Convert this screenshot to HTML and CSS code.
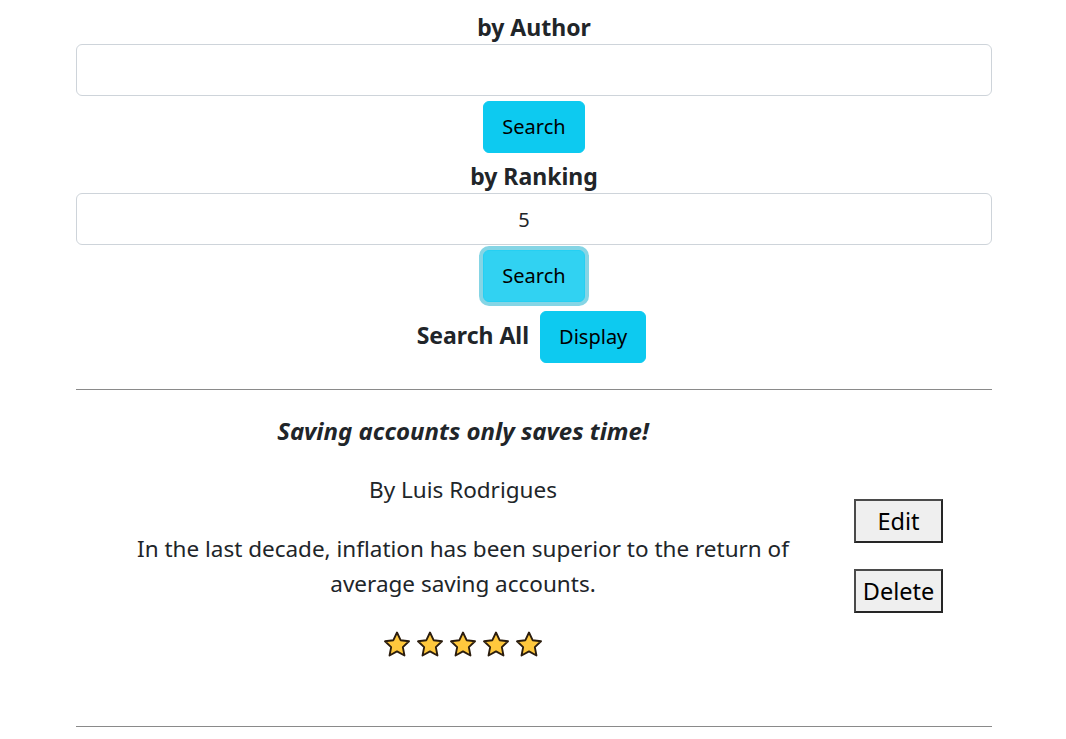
FILE: index.html
```html
<!DOCTYPE html>
<html lang="en">
<head>
<meta charset="utf-8">
<title>Articles</title>
<link rel="stylesheet" href="styles.css">
</head>
<body>
<main class="page">
  <section class="search">
    <h5 class="label label-first">by Author</h5>
    <input class="field" type="text" value="">
    <div class="btn-row"><button class="btn-info">Search</button></div>

    <h5 class="label label-second">by Ranking</h5>
    <input class="field field-number" type="text" value="5">
    <div class="btn-row"><button class="btn-info is-focused">Search</button></div>

    <div class="all-row"><span class="all-label">Search All</span><button class="btn-info">Display</button></div>
  </section>

  <hr class="rule rule-top">

  <article class="article">
    <div class="article-body">
      <h5 class="title">Saving accounts only saves time!</h5>
      <p class="byline">By Luis Rodrigues</p>
      <p class="text">In the last decade, inflation has been superior to the return of average saving accounts.</p>
      <div class="stars">
        <svg class="star" viewBox="0 0 24 24"><path d="M12 1.3l3.1 6.6 7.2.9-5.3 5 1.4 7.2L12 17.5l-6.4 3.5 1.4-7.2-5.3-5 7.2-.9z"/></svg>
        <svg class="star" viewBox="0 0 24 24"><path d="M12 1.3l3.1 6.6 7.2.9-5.3 5 1.4 7.2L12 17.5l-6.4 3.5 1.4-7.2-5.3-5 7.2-.9z"/></svg>
        <svg class="star" viewBox="0 0 24 24"><path d="M12 1.3l3.1 6.6 7.2.9-5.3 5 1.4 7.2L12 17.5l-6.4 3.5 1.4-7.2-5.3-5 7.2-.9z"/></svg>
        <svg class="star" viewBox="0 0 24 24"><path d="M12 1.3l3.1 6.6 7.2.9-5.3 5 1.4 7.2L12 17.5l-6.4 3.5 1.4-7.2-5.3-5 7.2-.9z"/></svg>
        <svg class="star" viewBox="0 0 24 24"><path d="M12 1.3l3.1 6.6 7.2.9-5.3 5 1.4 7.2L12 17.5l-6.4 3.5 1.4-7.2-5.3-5 7.2-.9z"/></svg>
      </div>
    </div>
    <div class="article-actions">
      <button class="btn-plain">Edit</button>
      <button class="btn-plain">Delete</button>
    </div>
  </article>

  <hr class="rule rule-bottom">
</main>
</body>
</html>
```

FILE: styles.css
```css
* { box-sizing: border-box; }

body {
  margin: 0;
  background: #fff;
  color: #212529;
  font-family: "Noto Sans", "Open Sans", sans-serif;
  font-size: 20px;
}

.page {
  width: 916px;
  margin-left: 76px;
}

.search {
  text-align: center;
}

.label {
  font-size: 23px;
  font-weight: 700;
  line-height: 30px;
  margin: 0 0 2px;
}

.label-first { margin-top: 12px; }
.label-second { margin-top: 8px; }

.field {
  display: block;
  width: 100%;
  height: 52px;
  border: 1px solid #ced4da;
  border-radius: 6px;
  padding: 0 12px;
  font: inherit;
  color: #212529;
  background: #fff;
  outline: none;
}

.field-number {
  text-align: center;
  padding: 0 32px 0 12px;
}

.btn-row {
  margin-top: 5px;
  height: 52px;
}

.btn-info {
  height: 52px;
  padding: 0 18px;
  border: 1px solid #0dcaf0;
  border-radius: 6px;
  background: #0dcaf0;
  color: #000;
  font: inherit;
  line-height: 30px;
  cursor: pointer;
}

.btn-info.is-focused {
  background: #31d2f2;
  border-color: #25cff2;
  box-shadow: 0 0 0 4px rgba(11, 172, 204, 0.5);
}

.all-row {
  margin-top: 9px;
  height: 52px;
  display: flex;
  justify-content: center;
  align-items: center;
  gap: 11px;
  padding-right: 5px;
}

.all-label {
  font-size: 23px;
  font-weight: 700;
  line-height: 30px;
  position: relative;
  top: -2px;
}

.rule {
  border: 0;
  border-top: 1px solid #8a8a8a;
  margin: 0;
}

.rule-top { margin-top: 26px; }

.article {
  display: grid;
  grid-template-columns: 774px 1fr;
  align-items: center;
}

.article-body {
  text-align: center;
  padding: 0 40px 67px;
}

.title {
  margin: 26px 0 0;
  font-size: 24px;
  font-weight: 700;
  font-style: italic;
  line-height: 30px;
}

.byline {
  margin: 29px 0 0;
  font-size: 22.5px;
  line-height: 30px;
}

.text {
  margin: 26px 0 0;
  font-size: 22.5px;
  line-height: 35px;
}

.stars {
  margin-top: 30px;
  display: flex;
  justify-content: center;
  gap: 5px;
  height: 28px;
}

.star {
  width: 28px;
  height: 28px;
  fill: #ffc83d;
  stroke: #2b1d0e;
  stroke-width: 1.6;
  stroke-linejoin: round;
}

.article-actions {
  display: flex;
  flex-direction: column;
  align-items: flex-start;
  gap: 26px;
  padding-left: 4px;
  padding-bottom: 4px;
}

.btn-plain {
  width: 89px;
  height: 44px;
  padding: 0;
  background: #efefef;
  border: 2px solid #4a4a4a;
  border-right-color: #262626;
  border-bottom-color: #262626;
  border-radius: 0;
  color: #000;
  font: inherit;
  font-size: 23.5px;
}
```
